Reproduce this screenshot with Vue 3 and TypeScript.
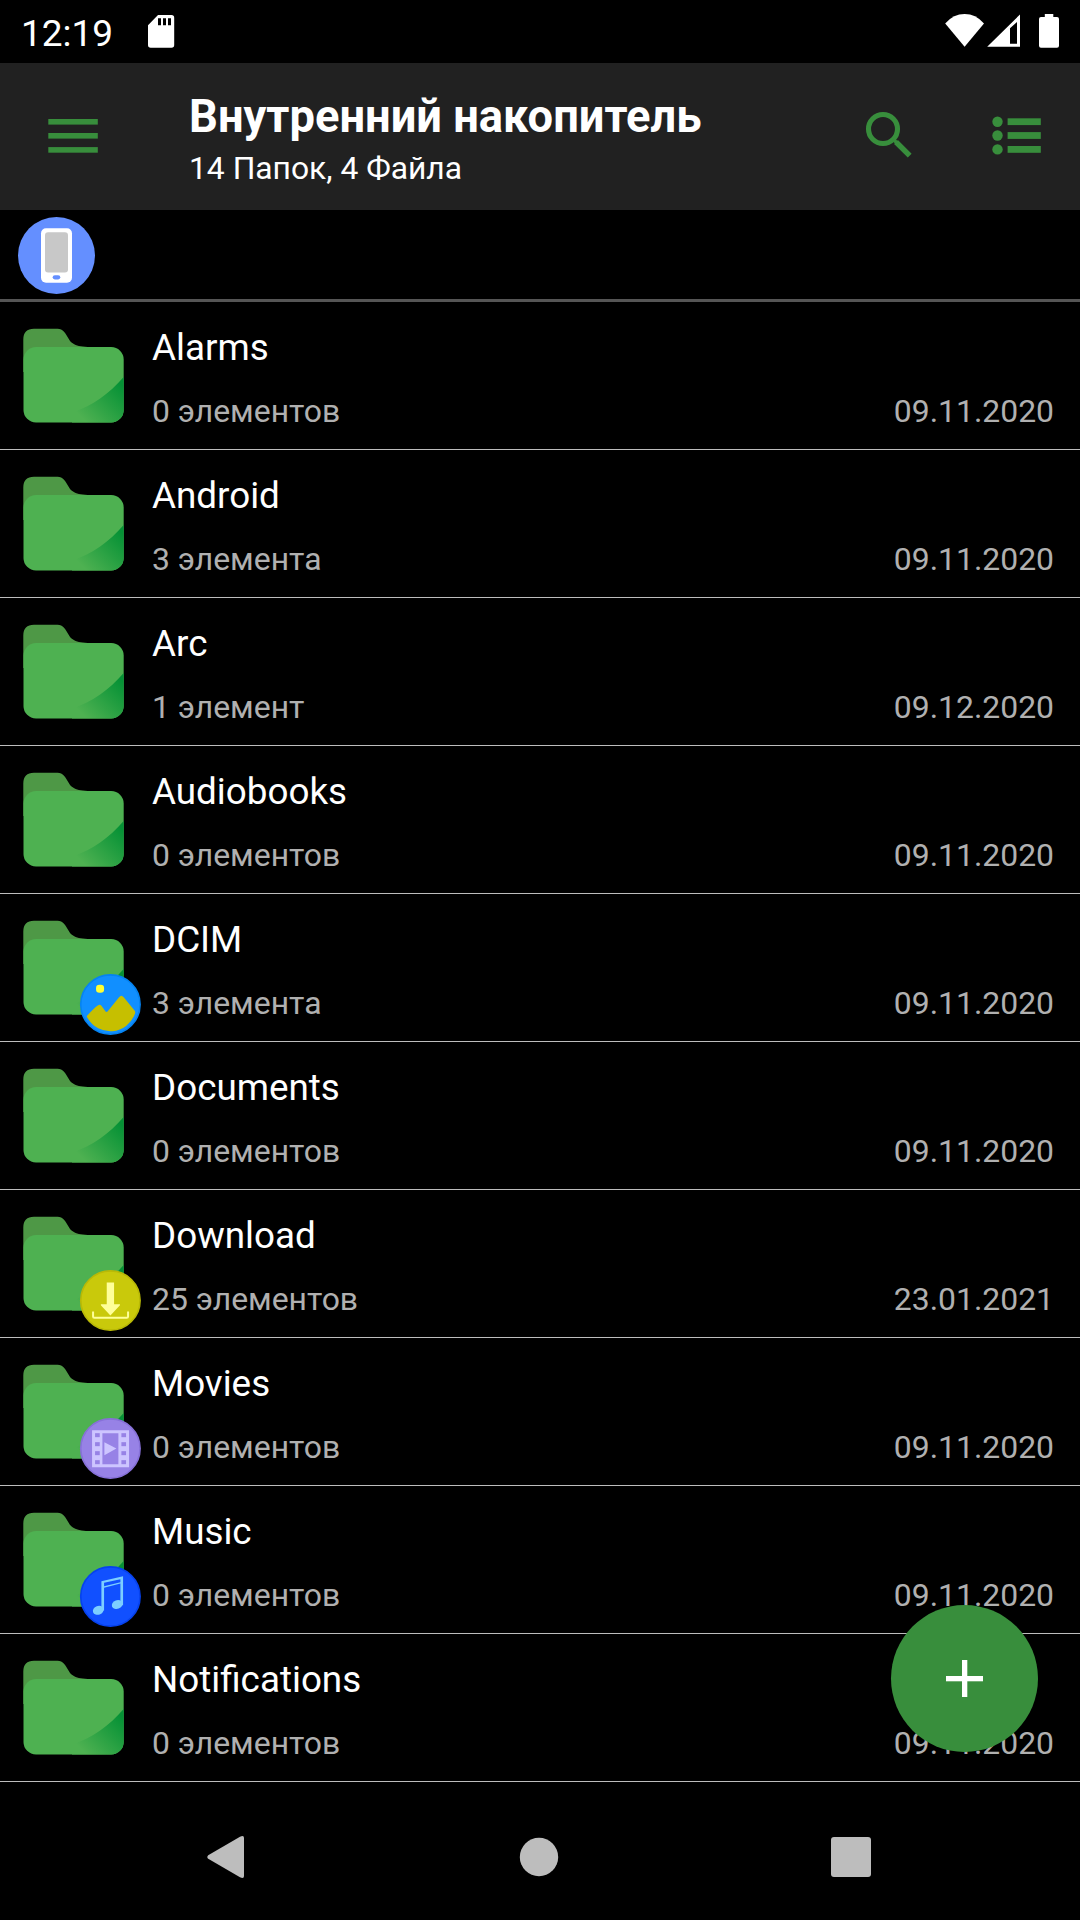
<script setup lang="ts">
type Badge = 'image' | 'download' | 'video' | 'music'

interface Folder {
  name: string
  items: string
  date: string
  badge?: Badge
}

const folders: Folder[] = [
  { name: 'Alarms', items: '0 элементов', date: '09.11.2020' },
  { name: 'Android', items: '3 элемента', date: '09.11.2020' },
  { name: 'Arc', items: '1 элемент', date: '09.12.2020' },
  { name: 'Audiobooks', items: '0 элементов', date: '09.11.2020' },
  { name: 'DCIM', items: '3 элемента', date: '09.11.2020', badge: 'image' },
  { name: 'Documents', items: '0 элементов', date: '09.11.2020' },
  { name: 'Download', items: '25 элементов', date: '23.01.2021', badge: 'download' },
  { name: 'Movies', items: '0 элементов', date: '09.11.2020', badge: 'video' },
  { name: 'Music', items: '0 элементов', date: '09.11.2020', badge: 'music' },
  { name: 'Notifications', items: '0 элементов', date: '09.11.2020' },
]
</script>

<template>
  <div class="screen">
    <svg class="defs" width="0" height="0" aria-hidden="true">
      <defs>
        <linearGradient id="fold" gradientUnits="userSpaceOnUse" x1="84" y1="118" x2="121" y2="82">
          <stop offset="0" stop-color="#4eb151" />
          <stop offset="1" stop-color="#059135" />
        </linearGradient>
      </defs>
    </svg>

    <div class="status">
      <span class="clock">12:19</span>
      <svg class="sd" width="27" height="33" viewBox="0 0 27 33">
        <path fill="#fff" fill-rule="evenodd" d="M10 0H23.5Q26.2 0 26.2 2.7V30Q26.2 32.7 23.5 32.7H2.7Q0 32.7 0 30V10.2ZM10 3.3V10.3H13V3.3ZM15 3.3V10.3H18V3.3ZM20 3.3V10.3H23V3.3Z" />
      </svg>
      <svg class="signals" width="115" height="35" viewBox="945 14 115 35">
        <path fill="#fff" d="M945.2 23.4Q953.5 14 964.6 14T984 23.4L964.6 46.8Z" />
        <path fill="#fff" fill-rule="evenodd" d="M987.2 46.8L1020 14.4V46.8ZM1010 28.3V43.7H1017V22Z" />
        <path fill="#fff" d="M1044.8 14H1053.3V17H1057Q1059 17 1059 19V45.7Q1059 47.8 1057 47.8H1041Q1039 47.8 1039 45.7V19Q1039 17 1041 17H1044.8Z" />
      </svg>
    </div>

    <header class="toolbar">
      <svg class="menu" width="50" height="34" viewBox="0 0 50 34" fill="#388e3c">
        <rect x=".3" width="49.5" y="0" height="5.6" />
        <rect x=".3" width="49.5" y="14" height="5.6" />
        <rect x=".3" width="49.5" y="28.1" height="5.6" />
      </svg>
      <div class="titles">
        <h1>Внутренний накопитель</h1>
        <p>14 Папок, 4 Файла</p>
      </div>
      <svg class="search" width="48" height="48" viewBox="865 111 48 48" fill="none" stroke="#388e3c">
        <circle cx="883" cy="129" r="14.5" stroke-width="5.1" />
        <path d="M893.3 139.3L896.5 142.5" stroke-width="3.5" />
        <path d="M896 142L909.7 155.7" stroke-width="5.4" />
      </svg>
      <svg class="list-icon" width="50" height="40" viewBox="992 116 50 40" fill="#388e3c">
        <g v-for="y in [121.7, 135.5, 149.4]" :key="y">
          <circle cx="997.5" :cy="y" r="5.2" />
          <rect x="1007.6" :y="y - 3.4" width="33.2" height="6.8" />
        </g>
      </svg>
    </header>

    <div class="location">
      <svg width="77" height="77" viewBox="0 0 77 77">
        <circle cx="38.5" cy="38.5" r="38.5" fill="#648fff" />
        <rect x="23" y="11.3" width="31" height="54.4" rx="5" fill="#fff" />
        <rect x="27" y="15.3" width="23" height="40.3" rx="3" fill="#c8c8c8" />
        <rect x="34.7" y="58.2" width="7.6" height="4.2" rx="2.1" fill="#648fff" />
      </svg>
    </div>

    <ul class="folders">
      <li v-for="f in folders" :key="f.name">
        <svg class="icon" width="152" height="147" viewBox="0 0 152 147">
          <path fill="#4e9846" d="M23.3 70V37.5Q23.3 26.7 34 26.7H57.5C63 26.7 65.8 31.5 68.5 36.5C72.3 43.5 78.5 45.2 97 45.2L97 70Z" />
          <rect x="23.5" y="45" width="100.2" height="75.4" rx="12.5" fill="#4eb151" />
          <path fill="url(#fold)" d="M123.7 75C109 92 93 103.5 72 110.5V120.4H111.2A12.5 12.5 0 0 0 123.7 107.9Z" />
          <g v-if="f.badge" transform="translate(110.4 110.5) scale(.33333)">
            <template v-if="f.badge === 'image'">
              <circle r="89" fill="#118fff" stroke="#0583f2" stroke-width="5" />
              <rect x="-43" y="-59" width="24" height="24" rx="10" fill="#ffff33" />
              <path fill="#c6bf00" d="M-70 34Q-50 12-39 4Q-32-2-27 4L-15 20Q-12 25-8 20L26-22Q33-31 40-22L73 19Q76 24 73 29A78 78 0 0 1-68 41Q-72 36-70 34Z" />
            </template>
            <template v-else-if="f.badge === 'download'">
              <circle r="89" fill="#c9c90b" stroke="#b9b906" stroke-width="5" />
              <path fill="#ffff99" d="M-11-54H11V11H28Q30 12 28 15L0 45L-28 15Q-30 12-28 11H-11Z" />
              <path fill="none" stroke="#ffff99" stroke-width="6" stroke-linejoin="round" d="M-52 33V48Q-52 51.5-48 51.5H49Q53 51.5 53 48V33" />
            </template>
            <template v-else-if="f.badge === 'video'">
              <circle r="89" fill="#9782e6" stroke="#8771d8" stroke-width="5" />
              <path fill="#cdc5ff" fill-rule="evenodd" d="M-55-55H56V56H-55ZM-24-46V47H24V-46Z" />
              <g v-for="y in [-46, -19, 8, 35]" :key="y" fill="#9782e6">
                <rect x="-46" :y="y" width="14" height="12" />
                <rect x="33" :y="y" width="14" height="12" />
              </g>
              <path fill="#cdc5ff" d="M-18-19L18 0L-18 20Z" />
            </template>
            <template v-else>
              <circle r="89" fill="#1150ff" stroke="#0642ee" stroke-width="5" />
              <g fill="#7ccfff">
                <ellipse cx="-36.5" cy="41.5" rx="16.5" ry="13" transform="rotate(-20 -36.5 41.5)" />
                <ellipse cx="20.5" cy="24" rx="16.5" ry="13" transform="rotate(-20 20.5 24)" />
                <path d="M-27-46L38-61V26H30V-39L-19-26V42H-27ZM-19-41V-31L30-43V-52Z" fill-rule="evenodd" />
              </g>
            </template>
          </g>
        </svg>
        <div class="info">
          <div class="name">{{ f.name }}</div>
          <div class="meta">
            <span>{{ f.items }}</span>
            <span>{{ f.date }}</span>
          </div>
        </div>
      </li>
    </ul>

    <nav class="nav">
      <svg width="40" height="44" viewBox="0 0 40 44">
        <path fill="#bdbdbd" d="M1.2 20.2L33 1.8Q37 -.2 37 3V41Q37 44.2 33 42.2L1.2 23.8Q-.6 22 1.2 20.2Z" />
      </svg>
      <svg width="40" height="40" viewBox="0 0 40 40">
        <circle cx="20" cy="20" r="19.2" fill="#bdbdbd" />
      </svg>
      <svg width="40" height="40" viewBox="0 0 40 40">
        <rect width="40" height="40" rx="3" fill="#bdbdbd" />
      </svg>
    </nav>

    <button class="fab" aria-label="Добавить">
      <svg width="37" height="37" viewBox="0 0 37 37" fill="#fff">
        <rect x="16" width="5.3" height="37" />
        <rect y="16" width="37" height="5.3" />
      </svg>
    </button>
  </div>
</template>

<style>
html,
body {
  background: #000;
}
</style>

<style scoped>
.screen {
  position: relative;
  width: 1080px;
  height: 1920px;
  overflow: hidden;
  display: flex;
  flex-direction: column;
  background: #000;
  color: #fff;
  font-family: Roboto, sans-serif;
}

svg {
  display: block;
  flex: none;
}

.defs {
  position: absolute;
}

.status {
  display: flex;
  height: 63px;
  box-sizing: border-box;
  padding: 0 20px 0 21px;
}

.clock {
  width: 127px;
  font-size: 37px;
  line-height: 68px;
}

.sd {
  margin-top: 15px;
}

.signals {
  margin: 14px 0 0 auto;
}

.toolbar {
  display: flex;
  align-items: flex-start;
  height: 147px;
  box-sizing: border-box;
  padding: 0 38px 0 48px;
  background: #212121;
}

.menu {
  margin-top: 56px;
}

.titles {
  margin: 27px auto 0 91px;
  white-space: nowrap;
}

h1 {
  margin: 0;
  font-size: 45.3px;
  line-height: 54px;
  font-weight: 700;
}

p {
  margin: 5px 0 0;
  font-size: 31.8px;
  line-height: 38px;
}

.search {
  margin: 48px 79px 0 0;
}

.list-icon {
  margin-top: 53px;
}

.location {
  height: 92px;
  box-sizing: border-box;
  padding: 7px 0 0 18px;
  border-bottom: 3px solid #555;
}

.folders {
  margin: 0;
  padding: 0;
  list-style: none;
}

li {
  display: flex;
  height: 148px;
  box-sizing: border-box;
  border-bottom: 1px solid #bdbdbd;
}

.info {
  flex: 1;
  padding: 24px 26px 0 0;
}

.name {
  font-size: 36.8px;
  line-height: 44px;
}

.meta {
  display: flex;
  justify-content: space-between;
  margin-top: 22px;
  color: #b0b0b0;
  font-size: 31.9px;
  line-height: 38px;
}

.nav {
  flex: 1;
  display: flex;
  justify-content: space-between;
  align-items: center;
  padding: 0 209px;
  padding-left: 207px;
  margin-top: 12px;
}

.fab {
  position: absolute;
  left: 891px;
  top: 1605px;
  width: 147px;
  height: 147px;
  display: flex;
  align-items: center;
  justify-content: center;
  border: 0;
  padding: 0;
  border-radius: 50%;
  background: #388e3c;
}
</style>
